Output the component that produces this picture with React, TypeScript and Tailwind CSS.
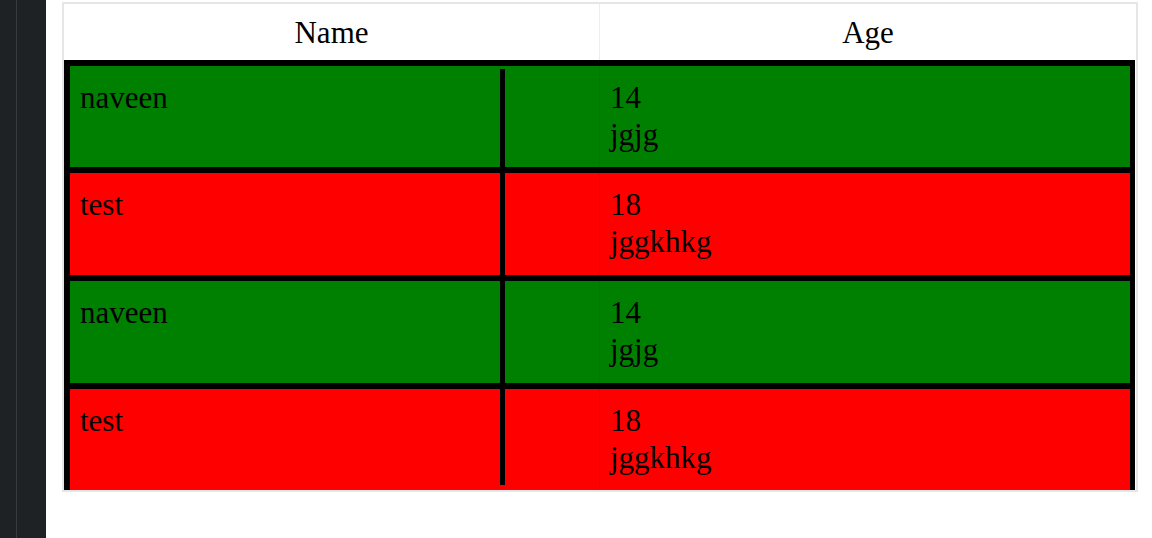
const rows = [
  { name: "naveen", age: "14", note: "jgjg", bg: "bg-[#008000]", h: "h-[107px]" },
  { name: "test", age: "18", note: "jggkhkg", bg: "bg-[#ff0000]", h: "h-[108px]" },
  { name: "naveen", age: "14", note: "jgjg", bg: "bg-[#008000]", h: "h-[108px]" },
  { name: "test", age: "18", note: "jggkhkg", bg: "bg-[#ff0000]", h: "h-[107px]" },
];

export default function App() {
  return (
    <div className="flex h-[538px] w-[1152px] bg-white text-black font-['Liberation_Serif',serif]">
      {/* editor gutter */}
      <div className="flex h-full w-[46px] shrink-0 bg-[#1e2225]">
        <div className="w-[16px] shrink-0" />
        <div className="h-full w-px bg-[#383c40]" />
      </div>

      <div className="pl-[16px] pt-[2px]">
        <div className="w-[1076px] border-2 border-[#e6e6e6]">
          {/* header */}
          <div className="flex h-[56px] text-[31px] leading-[37px]">
            <div className="flex w-[535px] items-center justify-center">Name</div>
            <div className="w-px bg-[#eeeeee]" />
            <div className="flex flex-1 items-center justify-center">Age</div>
          </div>

          {/* body: the name cell's right border runs on through the row borders */}
          {rows.map((r, i) => (
            <div
              key={i}
              className={`relative mr-px flex border-t-[6px] border-l-[6px] border-r-[5px] border-black ${r.bg} ${r.h} text-[31px] leading-[37px]`}
            >
              <div className="flex w-[529px] shrink-0">
                <div
                  className={`w-[435px] border-r-[5px] border-black pl-[10px] ${
                    i === 0 ? "mt-[3px] pt-[10px]" : "pt-[13px]"
                  } ${i === rows.length - 1 ? "mb-[5px]" : ""}`}
                >
                  {r.name}
                </div>
              </div>
              <div className="flex-1 border-l border-black/5 pl-[10px] pt-[13px]">
                <div>{r.age}</div>
                <div>{r.note}</div>
              </div>
              {i > 0 && (
                <div className="absolute -top-[6px] left-[430px] h-[6px] w-[5px] bg-black" />
              )}
            </div>
          ))}
        </div>
      </div>
    </div>
  );
}
